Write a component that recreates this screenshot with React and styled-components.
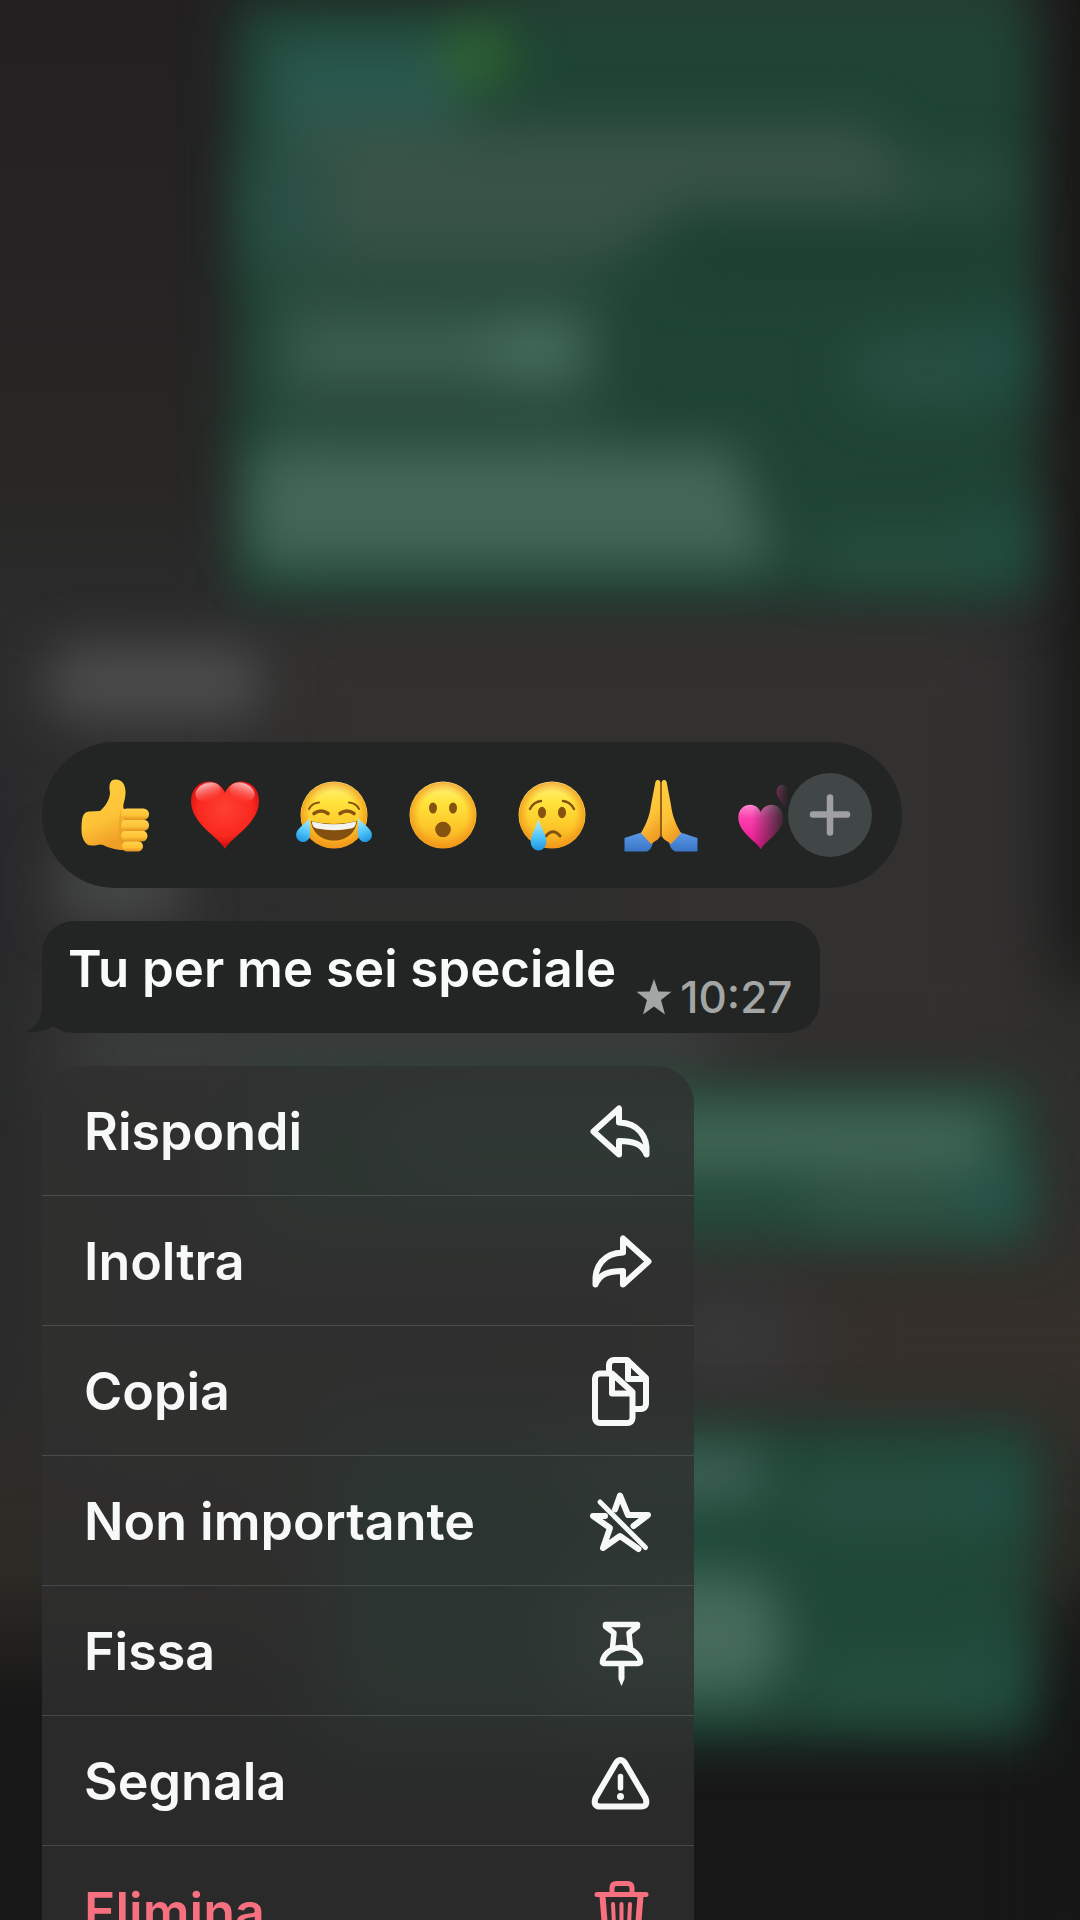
import React from "react";
import styled, { createGlobalStyle } from "styled-components";

const GlobalStyle = createGlobalStyle`
  *, *::before, *::after { box-sizing: border-box; }
  body {
    margin: 0;
    background: #171717;
    font-family: Inter, "Liberation Sans", sans-serif;
    -webkit-font-smoothing: antialiased;
  }
  button { font: inherit; border: 0; background: none; padding: 0; cursor: pointer; }
`;

const Page = styled.main`
  position: relative;
  height: 100vh;
  overflow: hidden;
  display: flex;
  flex-direction: column;
  align-items: flex-start;
  gap: 33px;
  padding: 742px 42px 0;
`;

const Wallpaper = styled.svg`
  position: absolute;
  inset: 0;
  width: 100%;
  height: 100%;
`;

const ReactionBar = styled.div`
  position: relative;
  flex: none;
  display: flex;
  align-items: center;
  width: 100%;
  max-width: 860px;
  height: 146px;
  padding: 0 30px 0 19px;
  border-radius: 73px;
  background: #232524;
`;

const ReactionStrip = styled.div`
  flex: 1;
  min-width: 0;
  display: flex;
  overflow: hidden;
  mask-image: linear-gradient(to right, #000 calc(100% - 36px), transparent);
`;

const Reaction = styled.button`
  flex: none;
  display: grid;
  place-items: center;
  width: 109px;
  height: 84px;
`;

const EmojiArt = styled.svg`
  width: 74px;
  height: 74px;
  overflow: visible;
`;

const MoreButton = styled.button`
  flex: none;
  display: grid;
  place-items: center;
  width: 84px;
  height: 84px;
  border-radius: 50%;
  background: #414646;
`;

const Bubble = styled.div`
  position: relative;
  flex: none;
  display: flex;
  gap: 20px;
  min-height: 112px;
  padding: 16px 28px 16px 26px;
  border-radius: 32px;
  background: #232524;
`;

const Tail = styled.svg`
  position: absolute;
  left: -16px;
  bottom: 0;
  width: 48px;
  height: 48px;
`;

const MessageText = styled.p`
  position: relative;
  margin: 0;
  color: #f9fbfa;
  font-size: 51px;
  font-weight: 600;
  line-height: 64px;
`;

const Meta = styled.div`
  align-self: flex-end;
  display: flex;
  align-items: center;
  gap: 8px;
  color: #a3a6a5;
  font-size: 44px;
  font-weight: 500;
  line-height: 40px;
`;

const Menu = styled.ul`
  position: relative;
  flex: none;
  width: 100%;
  max-width: 652px;
  margin: 0;
  padding: 0;
  list-style: none;
  overflow: hidden;
  border-radius: 38px;
  background: rgba(47, 47, 47, 0.8);
  backdrop-filter: blur(30px);
`;

const MenuItem = styled.li`
  height: 130px;
  border-bottom: 1px solid rgba(128, 140, 134, 0.32);
  &:last-child { border-bottom: 0; }
`;

const MenuButton = styled.button`
  display: flex;
  align-items: center;
  justify-content: space-between;
  width: 100%;
  height: 100%;
  padding: 2px 38px 0 42px;
  color: ${(p) => (p.$danger ? "#f7707f" : "#f7f9f8")};
  font-size: 52px;
  font-weight: 600;
  line-height: 64px;
`;

const IconArt = styled.svg`
  flex: none;
  width: 72px;
  height: 72px;
  fill: none;
  stroke: currentColor;
  stroke-width: 6px;
  stroke-linecap: round;
  stroke-linejoin: round;
`;

const Defs = styled.div`
  position: absolute;
  width: 0;
  height: 0;
`;

const Icon = ({ children }) => (
  <IconArt viewBox="-4 -4 72 72" aria-hidden="true">{children}</IconArt>
);

const ARROW = "M31 8.5V22.5C50 23 60 36 58.5 54.5C54 44 46 41 31 41V54.5L5.500 31.5Z";

const icons = {
  reply: <path d={ARROW} />,
  forward: <path d={ARROW} transform="matrix(-1 0 0 1 66 0)" />,
  copy: (
    <>
      <path d="M12 13.500H24L44.500 32V58a5 5 0 0 1-5 5H12a5 5 0 0 1-5-5V18.500a5 5 0 0 1 5-5Z" />
      <path d="M24 14V33.500H44" />
      <path d="M21 13V5a5 5 0 0 1 5-5H39L58 18V44a5 5 0 0 1-5 5H45" />
      <path d="M40 1V19H57" />
    </>
  ),
  unstar: (
    <>
      <path d="M27 19.500L32 5.500L40 25H60L45.500 36" />
      <path d="M17 26H5L22 38L15 58L32 46L50.500 59" />
      <path d="M12 12L57.500 57.500" strokeWidth="5" />
    </>
  ),
  pin: (
    <g strokeWidth="5.500">
      <path d="M24.500 28L26 13L17.500 6.500V4.500H49.500V6.500L41 13L42.500 28" />
      <path d="M16 43.500Q14 43.500 14.500 41C19 23 48 23 52.500 41Q53 43.500 50 43.500Z" />
      <path d="M30.500 45H36.500V59L33.500 66L30.500 59Z" fill="currentColor" stroke="none" />
    </g>
  ),
  warn: (
    <>
      <path d="M28 13Q32.500 7 37 13L57.500 48Q60.500 56.500 53 56.500H12.500Q4.500 56.500 7.500 48Z" />
      <path d="M32.500 26.500V38" strokeWidth="5.500" />
      <circle cx="32.500" cy="46.500" r="3.500" fill="currentColor" stroke="none" />
    </>
  ),
  trash: (
    <>
      <path d="M9 14.500H58M24 14V8q0-4.500 4.500-4.500H39.500Q44 3.500 44 8V14" strokeWidth="5" />
      <path d="M14.500 16L18 60Q18.500 64 22 64H45Q48.500 64 49 60L52.500 16" />
      <path d="M25 24L26.500 56M33.500 24V56M42 24L40.500 56" strokeWidth="4" />
    </>
  ),
};

const FaceBase = () => (
  <>
    <circle cx="36" cy="36" r="33.500" fill="url(#face)" />
    <circle cx="36" cy="36" r="33" fill="url(#faceEdge)" />
  </>
);

const HEART = "M36 70C30 58 2 45 2 22C2 9 11 2.500 20 2.500C28 2.500 34 8 36 14C38 8 44 2.500 52 2.500C61 2.500 70 9 70 22C70 45 42 58 36 70Z";
const TEAR = "M0-14C2-7 7.500 0 7.500 6A7.500 7.500 0 0 1-7.500 6C-7.500 0-2-7 0-14Z";

const emojis = [
  {
    name: "Pollice in su",
    art: (
      <>
        <path d="M1.500 51C1.500 38 3 33 9 32.500L20 32C25 28 30 20 30 14C28.500 5 30 .5 36 .5C44 .5 46 9 45.500 15C45 22 42 27 44 30L49 71C39 72 29 69 23 66C19 64 17 68 8 66C4 63 1.500 58 1.500 51Z" fill="url(#hand)" />
        <path d="M42 32C39 44 40 58 44 68" fill="none" stroke="#e29a20" strokeWidth="3" opacity=".5" />
        <g fill="url(#finger)">
          <rect x="42" y="62" width="21" height="10.500" rx="5.200" />
          <rect x="41" y="51.500" width="26.500" height="11" rx="5.400" />
          <rect x="41" y="40.500" width="28" height="11.500" rx="5.600" />
          <rect x="41" y="29.500" width="28" height="11.500" rx="5.600" />
        </g>
      </>
    ),
  },
  {
    name: "Cuore rosso",
    art: (
      <>
        <path d={HEART} fill="url(#red)" />
        <ellipse cx="19" cy="13" rx="13" ry="9" fill="url(#shine)" transform="rotate(-20 19 13)" />
        <ellipse cx="53" cy="13" rx="13" ry="9" fill="url(#shine)" transform="rotate(20 53 13)" />
      </>
    ),
  },
  {
    name: "Faccina con lacrime di gioia",
    art: (
      <>
        <FaceBase />
        <g fill="none" stroke="#8a5410" strokeWidth="3" strokeLinecap="round">
          <path d="M16 34.500Q23 29.500 30 34.500M42 34.500Q49 29.500 56 34.500" strokeWidth="3.600" />
          <path d="M11 30Q14 24 21 23.500M61 30Q58 24 51 23.500" strokeWidth="2" />
        </g>
        <path d="M13 42Q36 48 59 42C58 54 48 61.500 36 61.500C24 61.500 14 54 13 42Z" fill="#83500f" />
        <path d="M14 42.500Q36 48 58 42.500C58 47 56 49 53 49.500Q36 53 19 49.500C16 49 14 47 14 42.500Z" fill="#f5f3ef" />
        <path d={TEAR} fill="url(#tear)" transform="translate(7 51) rotate(22) scale(.92)" />
        <path d={TEAR} fill="url(#tear)" transform="translate(65 51) rotate(-22) scale(.92)" />
      </>
    ),
  },
  {
    name: "Faccina sorpresa",
    art: (
      <>
        <FaceBase />
        <g fill="#85520f">
          <ellipse cx="26" cy="29" rx="4" ry="5.500" />
          <ellipse cx="46" cy="29" rx="4" ry="5.500" />
          <circle cx="36" cy="50.500" r="7.800" />
        </g>
      </>
    ),
  },
  {
    name: "Faccina che piange",
    art: (
      <>
        <FaceBase />
        <g fill="#85520f">
          <ellipse cx="26" cy="33.500" rx="4" ry="5.800" />
          <ellipse cx="46" cy="33.500" rx="4" ry="5.800" />
        </g>
        <g fill="none" stroke="#85520f" strokeLinecap="round">
          <path d="M14 30Q18 22.500 25 22M58 30Q54 22.500 47 22" strokeWidth="2.500" />
          <path d="M30 57Q37 48.500 44 57" strokeWidth="3" />
        </g>
        <path d={TEAR} fill="url(#tear)" transform="translate(22.500 56) scale(1.050 1.150)" />
      </>
    ),
  },
  {
    name: "Mani giunte",
    art: (
      <>
        <path d="M-.5 59L18 53L28 63Q27 70 22 72.500H-.5Z" fill="url(#sleeve)" />
        <path d="M72.500 59L54 53L44 63Q45 70 50 72.500H72.500Z" fill="url(#sleeve)" />
        <path d="M35.500 4Q35 .5 32.500 1Q30.500 1 30 5L26 26C25 34 23 42 16 54L26 65C31 61 35.500 61 35.500 53Z" fill="url(#hand)" />
        <path d="M36.500 4Q37 .5 39.500 1Q41.500 1 42 5L46 26C47 34 49 42 56 54L46 65C41 61 36.500 61 36.500 53Z" fill="url(#hand)" />
        <path d="M36 4V58" stroke="#9a5c10" strokeWidth="1.500" />
      </>
    ),
  },
  {
    name: "Due cuori",
    art: (
      <>
        <path d={HEART} fill="url(#pink)" transform="translate(3 24) scale(.66 .66)" />
        <path d={HEART} fill="url(#pink)" transform="translate(43 4) rotate(8) scale(.34)" />
      </>
    ),
  },
];

const actions = [
  { label: "Rispondi", icon: "reply" },
  { label: "Inoltra", icon: "forward" },
  { label: "Copia", icon: "copy" },
  { label: "Non importante", icon: "unstar" },
  { label: "Fissa", icon: "pin" },
  { label: "Segnala", icon: "warn" },
  { label: "Elimina", icon: "trash", danger: true },
];

const Backdrop = () => (
  <Wallpaper viewBox="0 0 1080 1920" preserveAspectRatio="none" aria-hidden="true">
    <defs>
      <linearGradient id="base" x1="0" y1="0" x2="0" y2="1">
        <stop offset="0" stopColor="#222020" />
        <stop offset=".25" stopColor="#282726" />
        <stop offset=".36" stopColor="#2e2e2e" />
        <stop offset=".7" stopColor="#31302d" />
        <stop offset=".82" stopColor="#2c2a25" />
        <stop offset=".89" stopColor="#171717" />
        <stop offset="1" stopColor="#171717" />
      </linearGradient>
      <filter id="soft" filterUnits="userSpaceOnUse" x="-200" y="-200" width="1480" height="2320" colorInterpolationFilters="sRGB">
        <feGaussianBlur stdDeviation="25" />
      </filter>
      <filter id="wide" filterUnits="userSpaceOnUse" x="-200" y="-200" width="1480" height="2320" colorInterpolationFilters="sRGB">
        <feGaussianBlur stdDeviation="36" />
      </filter>
    </defs>
    <rect width="1080" height="1920" fill="url(#base)" />
    <g filter="url(#wide)">
      <rect x="-80" y="720" width="110" height="700" fill="#28292b" />
      <rect x="270" y="610" width="740" height="460" fill="#333130" />
      <rect x="230" y="880" width="400" height="60" fill="#292b2a" />
      <rect x="70" y="1010" width="650" height="80" fill="#3c403e" />
      <rect x="1060" y="-60" width="120" height="1040" fill="#161514" />
      <rect x="1070" y="1590" width="120" height="400" fill="#151716" />
      <rect x="650" y="1290" width="150" height="100" fill="#39383a" />
      <rect x="820" y="1270" width="340" height="140" fill="#35302b" />
    </g>
    <g filter="url(#soft)">
      <rect x="234" y="0" width="800" height="600" fill="#1f4435" />
      <rect x="500" y="-80" width="520" height="90" fill="#263c31" />
      <rect x="48" y="645" width="215" height="75" rx="30" fill="#4c4c4c" />
      <rect x="60" y="850" width="120" height="70" fill="#464848" />
      <rect x="250" y="1085" width="780" height="158" fill="#254b3b" />
      <rect x="320" y="1425" width="715" height="315" fill="#204838" />
    </g>
    <g filter="url(#soft)">
      <rect x="270" y="40" width="190" height="100" fill="#2a584e" />
      <circle cx="478" cy="56" r="34" fill="#30662f" />
      <path d="M290 125H870L930 205H680L620 256H320V200H290Z" fill="#395347" />
      <rect x="250" y="150" width="80" height="110" fill="#2b5046" />
      <rect x="900" y="165" width="110" height="35" fill="#2c4e40" />
      <rect x="270" y="265" width="330" height="170" fill="#2b4c3e" />
      <rect x="290" y="326" width="300" height="48" fill="#3e6151" />
      <ellipse cx="535" cy="350" rx="50" ry="28" fill="#47705f" />
      <rect x="680" y="235" width="320" height="45" fill="#1d3f31" />
      <ellipse cx="925" cy="370" rx="80" ry="40" fill="#284f42" />
      <rect x="980" y="310" width="40" height="90" fill="#215045" />
      <path d="M252 448H735L775 566H252Z" fill="#436757" />
      <rect x="820" y="535" width="170" height="40" fill="#294f41" />
      <rect x="980" y="510" width="40" height="65" fill="#215044" />
      <rect x="400" y="1112" width="590" height="56" fill="#436858" />
      <rect x="810" y="1180" width="180" height="40" fill="#305447" />
      <rect x="970" y="1165" width="50" height="60" fill="#26554b" />
      <rect x="560" y="1452" width="200" height="46" fill="#42655a" />
      <rect x="800" y="1475" width="170" height="50" fill="#295042" />
      <rect x="960" y="1465" width="60" height="60" fill="#235045" />
      <path d="M560 1575H760L790 1640L760 1695H560Z" fill="#466b5b" />
      <rect x="820" y="1665" width="160" height="35" fill="#295142" />
      <rect x="970" y="1640" width="45" height="60" fill="#204e42" />
    </g>
  </Wallpaper>
);

const EmojiPaints = () => (
  <svg width="0" height="0" aria-hidden="true">
    <defs>
      <linearGradient id="face" x1="0" y1="0" x2="0" y2="1">
        <stop offset="0" stopColor="#fff58a" />
        <stop offset=".3" stopColor="#ffe43c" />
        <stop offset=".65" stopColor="#fdc92b" />
        <stop offset="1" stopColor="#f6a31d" />
      </linearGradient>
      <radialGradient id="faceEdge">
        <stop offset=".7" stopColor="#f39a1d" stopOpacity="0" />
        <stop offset="1" stopColor="#f0901a" stopOpacity=".75" />
      </radialGradient>
      <linearGradient id="hand" x1="0" y1="0" x2=".3" y2="1">
        <stop offset="0" stopColor="#ffcf3f" />
        <stop offset=".65" stopColor="#fdc338" />
        <stop offset="1" stopColor="#f09f26" />
      </linearGradient>
      <linearGradient id="finger" x1="0" y1="0" x2="0" y2="1">
        <stop offset="0" stopColor="#ffd24a" />
        <stop offset=".6" stopColor="#fec336" />
        <stop offset="1" stopColor="#e2921f" />
      </linearGradient>
      <radialGradient id="red" cx=".5" cy=".4" r=".62">
        <stop offset="0" stopColor="#ff3f34" />
        <stop offset=".65" stopColor="#f9291f" />
        <stop offset="1" stopColor="#c9040d" />
      </radialGradient>
      <linearGradient id="shine" x1="0" y1="0" x2="0" y2="1">
        <stop offset="0" stopColor="#ffd9dc" stopOpacity=".85" />
        <stop offset="1" stopColor="#ff6a66" stopOpacity="0" />
      </linearGradient>
      <linearGradient id="tear" x1="0" y1="0" x2="0" y2="1">
        <stop offset="0" stopColor="#b7efff" />
        <stop offset=".6" stopColor="#4cc3f7" />
        <stop offset="1" stopColor="#1f93e0" />
      </linearGradient>
      <linearGradient id="sleeve" x1="0" y1="0" x2="0" y2="1">
        <stop offset="0" stopColor="#5b9be8" />
        <stop offset="1" stopColor="#3a74c4" />
      </linearGradient>
      <linearGradient id="pink" x1="0" y1="0" x2="0" y2="1">
        <stop offset="0" stopColor="#ff8ad0" />
        <stop offset=".3" stopColor="#fb3fae" />
        <stop offset="1" stopColor="#e8148c" />
      </linearGradient>
    </defs>
  </svg>
);

export default function App() {
  return (
    <>
      <GlobalStyle />
      <Page>
        <Defs><EmojiPaints /></Defs>
        <Backdrop />

        <ReactionBar role="toolbar" aria-label="Reazioni">
          <ReactionStrip>
            {emojis.map((e) => (
              <Reaction key={e.name} type="button" aria-label={e.name}>
                <EmojiArt viewBox="-1 -1 74 74" aria-hidden="true">{e.art}</EmojiArt>
              </Reaction>
            ))}
          </ReactionStrip>
          <MoreButton type="button" aria-label="Altre reazioni">
            <svg width="42" height="42" viewBox="0 0 42 42" stroke="#a09fa3" strokeWidth="6.500" strokeLinecap="round" aria-hidden="true">
              <path d="M21 3.500V38.500M4 20.500H38" />
            </svg>
          </MoreButton>
        </ReactionBar>

        <Bubble>
          <Tail viewBox="0 0 48 48" aria-hidden="true">
            <path d="M16 0V20C16 34 10 42 0 47C10 48 19 46 27 41L40 48V0Z" fill="#232524" />
          </Tail>
          <MessageText>Tu per me sei speciale</MessageText>
          <Meta>
            <svg width="36" height="36" viewBox="0 0 36 36" fill="currentColor" aria-hidden="true">
              <path d="M18 0L22.300 12.500L35.500 12.800L25 20.900L29 35.500L18 27.500L7 35.500L11 20.900L.5 12.800L13.700 12.500Z" />
            </svg>
            <time>10:27</time>
          </Meta>
        </Bubble>

        <Menu>
          {actions.map((a) => (
            <MenuItem key={a.label}>
              <MenuButton type="button" $danger={a.danger}>
                {a.label}
                <Icon>{icons[a.icon]}</Icon>
              </MenuButton>
            </MenuItem>
          ))}
        </Menu>
      </Page>
    </>
  );
}
